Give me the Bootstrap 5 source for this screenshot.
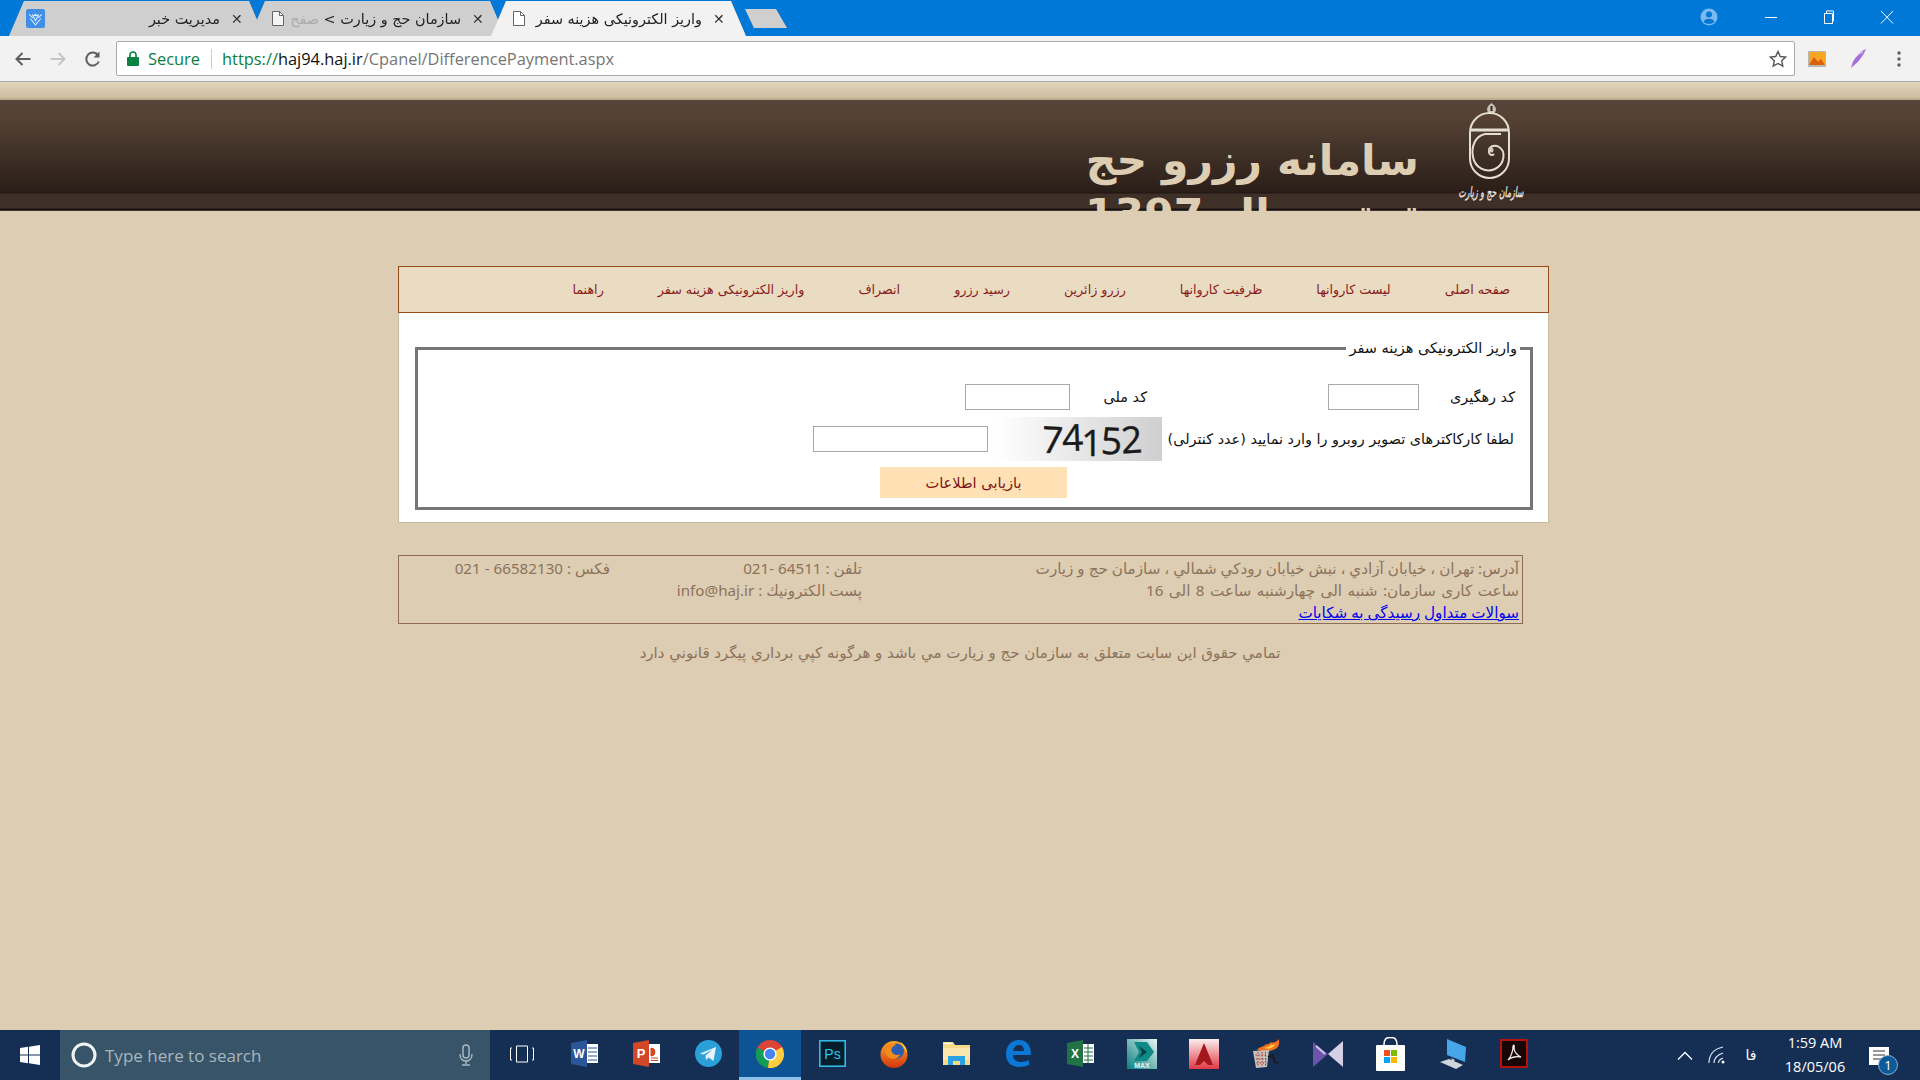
<!DOCTYPE html>
<html lang="fa">
<head>
<meta charset="utf-8">
<title>واریز الکترونیکی هزینه سفر</title>
<link href="https://cdn.jsdelivr.net/npm/bootstrap@5.3.0/dist/css/bootstrap.min.css" rel="stylesheet">
<style>
html,body{height:100%;margin:0;overflow:hidden}
body{font-family:"Noto Sans","DejaVu Sans",sans-serif;background:#ddcdb2;display:flex;flex-direction:column;width:1920px;height:1080px}
svg{display:block;flex:none}
/* browser chrome */
.titlebar{height:36px;background:#0078d7;flex:none;padding-left:9px;overflow:hidden}
.tabstrip{filter:drop-shadow(0 0 .6px #777);height:36px;padding-top:1px}
.tabx{width:255px;height:35px;margin-right:-14px;background:#cfcfcf;clip-path:polygon(0 100%,15px 0,240px 0,100% 100%);padding:0 21px 0 22px;font:14.4px "DejaVu Sans",sans-serif;color:#222}
.tabx.current{background:#f2f2f2;z-index:2}
.tabfav{margin-left:-5px}
.tabname{flex:1;direction:rtl;white-space:nowrap;text-align:right;margin:0 6px 0 2px}
.faded{color:#aaa}
.closex{font:14px "Liberation Sans",sans-serif;width:12px;text-align:center;color:#333;margin-left:5px}
.newtab{width:42px;height:19px;margin:8px 0 0 13px;background:#cfcfcf;clip-path:polygon(0 0,31px 0,100% 100%,9px 100%)}
.winbtns{margin-left:auto;margin-right:4px;color:#fff}
.wbtn{width:58px}
.wbtn.acct{margin-right:4px}
.toolbar{height:46px;background:#f2f2f2;border-bottom:1px solid #a9a9a9;flex:none;padding:0 0 0 14px}
.navicon{width:35px}
.omni{margin-left:-3px;width:1679px;flex:none;height:35px;background:#fff;border:1px solid #ababab;border-radius:2px;padding:0 7px 0 10px;font:16.4px "Open Sans",sans-serif}
.sec{color:#0b8043;padding:0 11px 0 9px;border-right:1px solid #ccc;height:20px;line-height:20px;margin-right:10px}
.urlg{color:#0b8043}.urlk{color:#111}.urlm{color:#757575}
.exts{flex:1;padding-left:1px}
.exts>div{width:41px}
/* page */
.pagearea{flex:1;min-height:0;background:#ddcdb2}
.strip{height:18px;background:linear-gradient(#e2d5bd,#cdbd9f);border-bottom:2px solid #bfae8e}
.banner{height:111px;background:linear-gradient(#57443a 0,#554234 17px,#2a1e18 92px,#1e1511 93px,#3f3027 94px,#3f3027 108px,#1a1210 109px,#1a1210 110px,#555 111px);overflow:hidden}
.banner-in{padding-right:396px;padding-top:3px}
.sitetitle{width:440px;padding-top:30px;margin-right:39px;font:bold 42.6px/54px "DejaVu Sans",sans-serif;color:#ddcdb2;direction:rtl;text-align:right;white-space:nowrap}
.sheet{width:1151px;margin:55px 0 0 398px;height:257px;background:#fff;border:1px solid #c5b9a0;border-top:0}
.mainnav{height:47px;background:#e9dcc2;border:1px solid #964a1a;margin:0 -1px;padding-right:27px;direction:rtl}
.mainnav a{font:12.7px "DejaVu Sans",sans-serif;color:#8b1a1a;text-decoration:none;padding:0 27px;white-space:nowrap}
.mainnav a:first-child{padding-right:11px}
.fset{margin:26px 15px 0 16px;border:3px solid #767676;direction:rtl;padding:0 0 9px}
.fset legend{float:none;width:auto;margin:0 10px 0 0;background:#fff;padding:0 3px;font:14.5px/18px "DejaVu Sans",sans-serif;color:#111;white-space:nowrap}
.frow{font:14.4px "DejaVu Sans",sans-serif;color:#111;white-space:nowrap}
.r1{height:26px;margin-top:27px;padding-right:15px}
.lbl1{width:96px}
.inp{height:26px;border:1px solid #a9a9a9;background:#fff;padding:0;outline:0}
.i1{width:91px}.i2{width:105px}.i3{width:175px}
.lbl2{width:77px;margin-right:181px}
.lbl3{width:352px}
.r2{height:44px;margin-top:7px;padding-right:16px}
.captcha{width:166px;height:44px;background:linear-gradient(90deg,#fff,#cfcfcf);direction:ltr;padding-left:46px;margin-left:8px;font:37px/44px "Open Sans",sans-serif;letter-spacing:-1.5px;color:#1a1a1a;-webkit-text-stroke:.4px #1a1a1a}
.captcha span{display:inline-block}
.cg1{transform:rotate(3deg)}.cg2{transform:translateY(-2px) rotate(-2deg)}.cg3{transform:translateY(3px)}.cg4{transform:translateY(1px) rotate(2deg)}.cg5{transform:rotate(-3deg)}
.sendbtn{display:block;width:187px;height:31px;margin:6px 463px 0 0;border:0;background:#ffe1b5;color:#7a1414;font:14.6px "DejaVu Sans",sans-serif;padding:0}
.footbox{width:1125px;height:69px;margin:32px 0 0 398px;border:1px solid #8c6e57;direction:rtl;color:#8c735c;font:15.2px/22px "Noto Sans","DejaVu Sans",sans-serif;padding:1px 3px 0 0}
.footline{white-space:nowrap;height:22px}
.fc1{width:657px}.fc2{width:252px}
.hours{word-spacing:1.5px}
.footbox a{color:#00e;text-decoration:underline}
.copyr{margin-top:18px;text-align:center;direction:rtl;color:#8c735c;font:15px/22px "DejaVu Sans",sans-serif;width:1920px}
/* taskbar */
.taskbar{height:50px;flex:none;background:#152f54;color:#fff}
.startbtn{width:60px}
.searchbox{width:430px;height:50px;background:#375468;padding:0 17px 0 11px;color:#a9b6be;font:17px "Open Sans",sans-serif}
.searchbox span{flex:1;padding-left:8px}
.tasks{padding-left:1px}
.tk{width:62px;height:50px;border-bottom:3px solid transparent}
.tk.tkon{background:#0c5494;border-bottom-color:#8fc0ea}
.tray{margin-left:auto;height:50px}
.tr1{width:30px}
.tr2{width:34px}
.trfa{width:34px;font:14px "DejaVu Sans",sans-serif}
.clock{width:94px;font:14.5px/24px "Open Sans",sans-serif;text-align:center;color:#fff}
.notif{width:34px;margin-right:24px;position:relative;padding-top:2px}
.cnt{position:absolute;left:16px;top:10px;width:20px;height:20px;border-radius:50%;background:#0f5a96;border:1px solid #7db3dd;font:13px/18px "Open Sans",sans-serif;text-align:center;color:#fff}
</style>
</head>
<body>

<div class="titlebar d-flex">
  <div class="tabstrip d-flex">
    <div class="tabx d-flex align-items-center">
      <svg class="tabfav" width="19" height="19" viewBox="0 0 18 18"><rect x="0" y="0" width="18" height="18" rx="2" fill="#3f8fe6"/><path d="M3 5l3 3 3-3 3 3 3-3M4 9l5 6 5-6M6 5l3 6 3-6" stroke="#d8ecff" stroke-width="1" fill="none"/></svg>
      <div class="tabname">مدیریت خبر</div><div class="closex">✕</div>
    </div>
    <div class="tabx d-flex align-items-center">
      <svg width="12" height="15" viewBox="0 0 12 15"><path d="M.5.5h7l4 4v10H.5z" fill="#f4f4f4" stroke="#666"/><path d="M7.5.5v4h4" fill="none" stroke="#666"/></svg>
      <div class="tabname">سازمان حج و زیارت &gt; <span class="faded">صفح</span></div><div class="closex">✕</div>
    </div>
    <div class="tabx current d-flex align-items-center">
      <svg width="12" height="15" viewBox="0 0 12 15"><path d="M.5.5h7l4 4v10H.5z" fill="#fff" stroke="#666"/><path d="M7.5.5v4h4" fill="none" stroke="#666"/></svg>
      <div class="tabname">واریز الکترونیکی هزینه سفر</div><div class="closex">✕</div>
    </div>
    <div class="newtab"></div>
  </div>
  <div class="winbtns d-flex align-items-start">
    <div class="wbtn acct d-flex justify-content-center pt-2"><svg width="18" height="18" viewBox="0 0 18 18"><circle cx="9" cy="9" r="8.5" fill="#7cb8ee"/><circle cx="9" cy="6.500" r="3" fill="#0078d7"/><path d="M3.600 14a5.600 4.400 0 0 1 10.800 0a8 8 0 0 1-10.800 0z" fill="#0078d7"/></svg></div>
    <div class="wbtn d-flex justify-content-center"><svg width="14" height="36" viewBox="0 0 14 36"><path d="M1 17.500h12" stroke="#fff"/></svg></div>
    <div class="wbtn d-flex justify-content-center"><svg width="14" height="36" viewBox="0 0 14 36"><path d="M2.500 13.500h8v10h-8zM4.500 13v-2h7v10h-1" stroke="#fff" fill="none"/></svg></div>
    <div class="wbtn d-flex justify-content-center"><svg width="14" height="36" viewBox="0 0 14 36"><path d="M1 11l12 12.500M13 11L1 23.500" stroke="#fff" fill="none"/></svg></div>
  </div>
</div>

<div class="toolbar d-flex align-items-center">
  <div class="navicon d-flex"><svg width="18" height="18" viewBox="0 0 18 18"><path d="M16.500 9H2.500M8.500 3l-6 6 6 6" fill="none" stroke="#5f5f5f" stroke-width="2"/></svg></div>
  <div class="navicon d-flex"><svg width="18" height="18" viewBox="0 0 18 18"><path d="M1.500 9h14M9.500 3l6 6-6 6" fill="none" stroke="#c6c6c6" stroke-width="2"/></svg></div>
  <div class="navicon d-flex"><svg width="18" height="18" viewBox="0 0 18 18"><path d="M14.800 11.500a6.500 6.500 0 1 1-.8-6.300" fill="none" stroke="#5f5f5f" stroke-width="2"/><path d="M15.500 1.500v6h-6z" fill="#5f5f5f"/></svg></div>
  <div class="omni d-flex align-items-center">
    <svg width="12" height="15" viewBox="0 0 12 15"><rect x="0" y="6" width="12" height="9" rx="1" fill="#0b8043"/><path d="M3 6.500V4a3 3 0 0 1 6 0v2.500" fill="none" stroke="#0b8043" stroke-width="1.600"/></svg>
    <div class="sec">Secure</div>
    <div><span class="urlg">https://</span><span class="urlk">haj94.haj.ir</span><span class="urlm">/Cpanel/DifferencePayment.aspx</span></div>
    <svg class="ms-auto" width="18" height="18" viewBox="0 0 18 18"><path d="M9 1.500l2.300 5 5.400.6-4 3.700 1.100 5.400L9 13.500l-4.800 2.700 1.100-5.400-4-3.700 5.400-.6z" fill="none" stroke="#555" stroke-width="1.400"/></svg>
  </div>
  <div class="exts d-flex align-items-center">
    <div class="d-flex justify-content-center"><svg width="18" height="16" viewBox="0 0 18 16"><rect width="18" height="16" fill="#b9b9b0"/><rect x="1" y="1" width="16" height="13" fill="#f5a623"/><path d="M1 14l5-8 4 5 3-3 4 6z" fill="#d95f0e"/></svg></div>
    <div class="d-flex justify-content-center"><svg width="18" height="20" viewBox="0 0 18 20"><path d="M17 0C10 3 4 9 2 19 5 16 12 12 17 0z" fill="#a56ed8"/><path d="M1 20C2 12 8 5 14 3" stroke="#eee" fill="none"/></svg></div>
    <div class="d-flex justify-content-center"><svg width="4" height="16" viewBox="0 0 4 16"><circle cx="2" cy="2" r="1.700" fill="#5f5f5f"/><circle cx="2" cy="8" r="1.700" fill="#5f5f5f"/><circle cx="2" cy="14" r="1.700" fill="#5f5f5f"/></svg></div>
  </div>
</div>

<div class="pagearea">
  <div class="strip"></div>
  <div class="banner">
    <div class="banner-in d-flex justify-content-end">
      <div class="sitetitle">سامانه رزرو حج<br>تمتع سال 1397</div>
      <svg width="66" height="100" viewBox="0 0 66 100">
        <path d="M33.500 0c-4 3-6 6-3 10h6c3-4 1-7-3-10z" fill="#c9c2b6"/><path d="M33.500 3v5" stroke="#2f241d" stroke-width="2"/>
        <rect x="12" y="10" width="39" height="65" rx="19.500" fill="none" stroke="#e4ddd1" stroke-width="2"/>
        <path d="M12 27h39" stroke="#e4ddd1" stroke-width="3"/>
        <path d="M43 31H27C17 33 13 44 15 54c2 11 13 16 22 12 10-5 11-18 4-22-5-3-11 0-10 5 0 3 3 4 5 2" fill="none" stroke="#e4ddd1" stroke-width="2"/>
        <circle cx="33" cy="47" r="2.500" fill="#cfc8bb"/>
        <text x="33" y="94" font-family="DejaVu Sans" font-size="14" font-weight="bold" font-style="italic" fill="#e4ddd1" text-anchor="middle" direction="rtl" textLength="65" lengthAdjust="spacingAndGlyphs">سازمان حج و زيارت</text>
      </svg>
    </div>
  </div>

  <div class="sheet">
    <nav class="mainnav d-flex align-items-center">
      <a href="#">صفحه اصلى</a><a href="#">ليست كاروانها</a><a href="#">ظرفيت كاروانها</a><a href="#">رزرو زائرين</a><a href="#">رسيد رزرو</a><a href="#">انصراف</a><a href="#">واريز الكترونيكى هزينه سفر</a><a href="#">راهنما</a>
    </nav>
    <fieldset class="fset">
      <legend>واريز الكترونيكى هزينه سفر</legend>
      <div class="frow r1 d-flex align-items-center">
        <span class="lbl1">كد رهگيرى</span>
        <input class="inp i1" type="text" aria-label="كد رهگيرى">
        <span class="lbl2">كد ملى</span>
        <input class="inp i2" type="text" aria-label="كد ملى">
      </div>
      <div class="frow r2 d-flex align-items-center">
        <span class="lbl3">لطفا كاركاكترهاى تصوير روبرو را وارد نماييد (عدد كنترلى)</span>
        <div class="captcha"><span class="cg1">7</span><span class="cg2">4</span><span class="cg3">1</span><span class="cg4">5</span><span class="cg5">2</span></div>
        <input class="inp i3" type="text" aria-label="عدد كنترلى">
      </div>
      <button class="sendbtn" type="button">بازيابى اطلاعات</button>
    </fieldset>
  </div>

  <div class="footbox">
    <div class="footline d-flex"><div class="fc1">آدرس: تهران ، خيابان آزادي ، نبش خيابان رودكي شمالي ، سازمان حج و زيارت</div><div class="fc2">تلفن : 64511 -021</div><div>فكس : 66582130 - 021</div></div>
    <div class="footline d-flex"><div class="fc1 hours">ساعت كارى سازمان: شنبه الى چهارشنبه ساعت 8 الى 16</div><div class="fc2">پست الكترونيك : info@haj.ir</div></div>
    <div class="footline"><a href="#">سوالات متداول</a> <a href="#">رسيدگى به شكايات</a></div>
  </div>
  <div class="copyr">تمامي حقوق اين سايت متعلق به سازمان حج و زيارت مي باشد و هرگونه كپي برداري پيگرد قانوني دارد</div>
</div>

<div class="taskbar d-flex align-items-center">
  <div class="startbtn d-flex justify-content-center"><svg width="20" height="20" viewBox="0 0 20 20"><path d="M0 3l8-1.200v7.700H0zM9 1.700L20 0v9.500H9zM0 10.500h8v7.700L0 17zM9 10.500h11V20L9 18.300z" fill="#fff"/></svg></div>
  <div class="searchbox d-flex align-items-center">
    <svg width="26" height="26" viewBox="0 0 26 26"><circle cx="13" cy="13" r="11" fill="none" stroke="#f0f3f5" stroke-width="3"/></svg>
    <span>Type here to search</span>
    <svg width="14" height="22" viewBox="0 0 14 22"><rect x="4" y="1" width="6" height="13" rx="3" fill="none" stroke="#a9b6be" stroke-width="1.500"/><path d="M1 10c0 5 3 7 6 7s6-2 6-7M7 17v3M3 21h8" fill="none" stroke="#a9b6be" stroke-width="1.500"/></svg>
  </div>
  <div class="tasks d-flex">
    <div class="tk d-flex align-items-center justify-content-center"><svg width="24" height="18" viewBox="0 0 24 18"><path d="M6.500 1h11v16h-11zM2 3H.500v12H2M22 3h1.500v12H22" fill="none" stroke="#fff"/></svg></div>
    <div class="tk d-flex align-items-center justify-content-center"><svg width="27" height="27" viewBox="0 0 27 27"><path d="M0 3l16-3v27L0 24z" fill="#2b579a"/><rect x="16" y="4" width="11" height="19" fill="#fff"/><path d="M17 8h9M17 12h9M17 16h9M17 20h9" stroke="#2b579a"/><text x="8" y="18" font-family="Liberation Sans" font-size="12" font-weight="bold" fill="#fff" text-anchor="middle">W</text></svg></div>
    <div class="tk d-flex align-items-center justify-content-center"><svg width="27" height="27" viewBox="0 0 27 27"><path d="M0 3l16-3v27L0 24z" fill="#d24726"/><rect x="16" y="4" width="11" height="19" fill="#fff"/><path d="M18 8a4 4 0 1 1 0 8zM18 18h7M18 20.500h7" fill="#d24726" stroke="#d24726"/><text x="8" y="18" font-family="Liberation Sans" font-size="13" font-weight="bold" fill="#fff" text-anchor="middle">P</text></svg></div>
    <div class="tk d-flex align-items-center justify-content-center"><svg width="27" height="27" viewBox="0 0 27 27"><circle cx="13.500" cy="13.500" r="13.500" fill="#2a9fd8"/><path d="M5 13.500l16-6.500-2.500 14-5-3.600-2.500 2.500-.5-4.500 7-6-9 5z" fill="#e6f3fa"/></svg></div>
    <div class="tk tkon d-flex align-items-center justify-content-center"><svg width="28" height="28" viewBox="0 0 28 28"><circle cx="14" cy="14" r="14" fill="#db4437"/><path d="M14 14L1.500 7.500A14 14 0 0 0 12 28z" fill="#0f9d58"/><path d="M14 14L12 28A14 14 0 0 0 28 14 14 14 0 0 0 26 7z" fill="#ffcd40"/><circle cx="14" cy="14" r="6.600" fill="#fff"/><circle cx="14" cy="14" r="5.200" fill="#4285f4"/></svg></div>
    <div class="tk d-flex align-items-center justify-content-center"><svg width="27" height="27" viewBox="0 0 27 27"><rect x=".8" y=".8" width="25.400" height="25.400" fill="#061e2c" stroke="#31c5f0" stroke-width="1.500"/><text x="13.500" y="18.500" font-family="Liberation Sans" font-size="14" fill="#31c5f0" text-anchor="middle">Ps</text></svg></div>
    <div class="tk d-flex align-items-center justify-content-center"><svg width="28" height="28" viewBox="0 0 28 28"><defs><linearGradient id="ffg" x1="0" y1="0" x2="0" y2="1"><stop offset="0" stop-color="#f9a825"/><stop offset="1" stop-color="#d4350f"/></linearGradient></defs><circle cx="14" cy="14.500" r="13.500" fill="url(#ffg)"/><circle cx="16.500" cy="11" r="7.500" fill="#2a5db0"/><path d="M5 6C8 3 13 3 16 5c-3 1-5 3-4.500 6 1 4 6 5 9 3-3 6-10 6-13.500 2C5 13 4 9 5 6z" fill="#f28a1c"/><path d="M20 2c4 2 7 6 7 11-2-4-4-7-7-11z" fill="#ffcf3a"/></svg></div>
    <div class="tk d-flex align-items-center justify-content-center"><svg width="27" height="23" viewBox="0 0 27 23"><path d="M0 0h10l2 3h15v20H0z" fill="#f7d98a"/><path d="M0 6h27v12H0z" fill="#fbe7ad"/><path d="M1.500 1.500h7" stroke="#fff" stroke-width="1.500"/><path d="M5 23v-9h17v9h-5v-4h-7v4z" fill="#29a3e6"/></svg></div>
    <div class="tk d-flex align-items-center justify-content-center"><svg width="26" height="27" viewBox="0 0 26 27"><path d="M1 14C1 5 7 0 14 0c8 0 12 6 12 15H8c0 5 4 7 8 7 3 0 6-1 8-2v5c-3 1-6 2-10 2C6 27 1 22 1 14zM8 11h11c0-4-2-6-5-6s-5 2-6 6z" fill="#0a78d4"/></svg></div>
    <div class="tk d-flex align-items-center justify-content-center"><svg width="27" height="27" viewBox="0 0 27 27"><path d="M0 3l16-3v27L0 24z" fill="#217346"/><rect x="16" y="4" width="11" height="19" fill="#fff"/><path d="M17 8h9M17 12h9M17 16h9M17 20h9M21 4v19" stroke="#217346"/><text x="8" y="18" font-family="Liberation Sans" font-size="12" font-weight="bold" fill="#fff" text-anchor="middle">X</text></svg></div>
    <div class="tk d-flex align-items-center justify-content-center"><svg width="30" height="30" viewBox="0 0 30 30"><defs><linearGradient id="mxg" x1="0" y1="1" x2="1" y2="0"><stop offset="0" stop-color="#0a7f7b"/><stop offset="1" stop-color="#e8f6f5"/></linearGradient></defs><rect width="30" height="30" fill="url(#mxg)"/><path d="M7 3h13l7 10-7 9H7l5-9z" fill="#0f8a86"/><path d="M12 7l8 6-8 6 3-6z" fill="#063f3f"/><text x="15" y="28.500" font-family="Liberation Sans" font-size="7" font-weight="bold" fill="#e8f6f5" text-anchor="middle">MAX</text></svg></div>
    <div class="tk d-flex align-items-center justify-content-center"><svg width="30" height="30" viewBox="0 0 30 30"><defs><linearGradient id="acg" x1="0" y1="0" x2="0" y2="1"><stop offset="0" stop-color="#fbeeee"/><stop offset="1" stop-color="#e23a45"/></linearGradient></defs><rect width="30" height="30" fill="url(#acg)"/><path d="M15 4L6 26h5l4-4 4 4h5z" fill="#a5161d"/></svg></div>
    <div class="tk d-flex align-items-center justify-content-center"><svg width="29" height="29" viewBox="0 0 29 29"><path d="M5 11C8 7 12 8 14 5c1 1 3 0 5-2 0 1 1 1 3 0 0 1 2 0 5-3 0 3 1 6-2 9-3 2-9 5-20 2z" fill="#f4711f"/><path d="M12 9c3-1 6-1 8-4 0 2 3 1 4-1-1 3-3 4-7 6z" fill="#ffd24a"/><path d="M1 12l16-1-2 17-11 1z" fill="#c8c2bc"/><path d="M3.500 16h12M4 20h11M4.500 24h10M6 13v15M10 13v15M13.500 13v15" stroke="#b3302c" stroke-dasharray="1.500 1.500"/><path d="M16 18l5-2 1.500 7 3.500 1" stroke="#1c1c1c" stroke-width="2" fill="none"/></svg></div>
    <div class="tk d-flex align-items-center justify-content-center"><svg width="30" height="30" viewBox="0 0 30 30"><path d="M0 3l15 12L0 28z" fill="#6c54a8"/><path d="M3 7l9 8" stroke="#cfc6e8" stroke-width="2"/><path d="M30 2v26L15 15z" fill="#d6cfe8"/></svg></div>
    <div class="tk d-flex align-items-center justify-content-center"><svg width="29" height="34" viewBox="0 0 29 34"><path d="M8 8C8 2 10 .5 14.500 .5S21 2 21 8" fill="none" stroke="#fff" stroke-width="1.600"/><rect y="8" width="29" height="26" rx="1" fill="#fff"/><rect x="8" y="13" width="6" height="6" fill="#f25022"/><rect x="15" y="13" width="6" height="6" fill="#7fba00"/><rect x="8" y="20" width="6" height="6" fill="#00a4ef"/><rect x="15" y="20" width="6" height="6" fill="#ffb900"/></svg></div>
    <div class="tk d-flex align-items-center justify-content-center"><svg width="29" height="30" viewBox="0 0 29 30"><path d="M9 0l19 8-1 15-18-7z" fill="#45a7ea"/><path d="M13 19l4 2-2 2zM2 23l9-3 14 6-7 4z" fill="#cfd5da"/></svg></div>
    <div class="tk d-flex align-items-center justify-content-center"><svg width="28" height="29" viewBox="0 0 28 29"><rect x="1" y="1" width="26" height="27" fill="#1a0505" stroke="#b3130b" stroke-width="2"/><path d="M8 21c3-3 5-9 5-13 0-3 2-2 1 1 0 4 4 8 7 9-4-1-10 0-13 3z" fill="none" stroke="#eee" stroke-width="1.300"/></svg></div>
  </div>
  <div class="tray d-flex align-items-center">
    <div class="tr1 d-flex justify-content-center"><svg width="16" height="9" viewBox="0 0 16 9"><path d="M1 8.500l7-7 7 7" fill="none" stroke="#fff" stroke-width="1.300"/></svg></div>
    <div class="tr2 d-flex justify-content-center"><svg width="18" height="18" viewBox="0 0 18 18"><path d="M1 17C1 9 6 3 15 1M6 17c0-5 3-8 9-10M10.500 17c0-3 2-4 4.500-5" fill="none" stroke="#dce3ea" stroke-width="1.200"/><circle cx="15" cy="16" r="1.500" fill="#fff"/></svg></div>
    <div class="trfa text-center">فا</div>
    <div class="clock"><div>1:59 AM</div><div>18/05/06</div></div>
    <div class="notif d-flex justify-content-center"><svg width="20" height="18" viewBox="0 0 20 18"><path d="M0 0h20v18H0z" fill="#fff"/><path d="M4 4h12M4 8h12M4 12h12" stroke="#333"/></svg><div class="cnt">1</div></div>
  </div>
</div>

</body>
</html>
